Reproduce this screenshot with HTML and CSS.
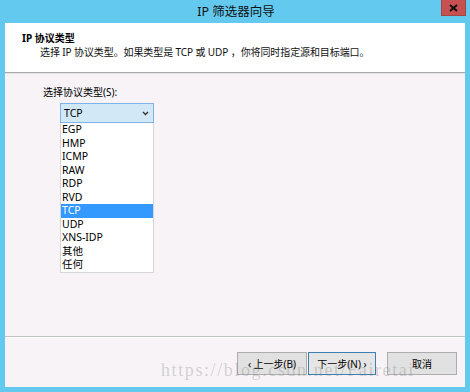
FILE: index.html
```html
<!DOCTYPE html>
<html lang="zh-CN">
<head>
<meta charset="utf-8">
<title>IP 筛选器向导</title>
<link rel="stylesheet" href="styles.css">
</head>
<body>
<div class="window">
  <div class="titlebar">
    <div class="title">IP 筛选器向导</div>
    <div class="close"><svg width="9" height="8" viewBox="0 0 9 8"><path d="M1 1 L8 7 M8 1 L1 7" stroke="#111" stroke-width="2"/></svg></div>
  </div>
  <div class="client">
    <div class="header">
      <div class="h-title">IP 协议类型</div>
      <div class="h-sub">选择 IP 协议类型。如果类型是 TCP 或 UDP ，你将同时指定源和目标端口。</div>
    </div>
    <div class="content">
      <div class="label">选择协议类型(S):</div>
      <div class="dropdown">
        <div class="combo">
          <span>TCP</span>
          <svg class="chev" width="7" height="5" viewBox="0 0 7 5"><path d="M1 1 L3.5 3.5 L6 1" fill="none" stroke="#333" stroke-width="1.3"/></svg>
        </div>
        <ul class="list">
          <li>EGP</li>
          <li>HMP</li>
          <li>ICMP</li>
          <li>RAW</li>
          <li>RDP</li>
          <li>RVD</li>
          <li class="sel">TCP</li>
          <li>UDP</li>
          <li>XNS-IDP</li>
          <li>其他</li>
          <li>任何</li>
        </ul>
      </div>
    </div>
    <div class="footer">
      <button class="btn btn-prev">&lsaquo; 上一步(B)</button>
      <button class="btn btn-next">下一步(N) &rsaquo;</button>
      <button class="btn btn-cancel">取消</button>
      <div class="watermark">https://blog.csdn.net/Fairetai</div>
    </div>
  </div>
</div>
</body>
</html>
```
FILE: styles.css
```css
* { box-sizing: border-box; }
html, body { margin: 0; padding: 0; }
body {
  width: 470px;
  height: 392px;
  overflow: hidden;
  font-family: "Noto Sans", "Noto Sans CJK SC", sans-serif;
  font-size: 10px;
  color: #000;
}
.window {
  width: 470px;
  height: 392px;
  background: #63c9ef;
  padding: 0 5px 5px 5px;
  display: flex;
  flex-direction: column;
}
.titlebar {
  height: 23px;
  position: relative;
  display: flex;
  align-items: center;
  justify-content: center;
}
.title {
  font-size: 12.5px;
  line-height: 23px;
  color: #111;
  padding-left: 2px;
}
.close {
  position: absolute;
  left: 436px;
  top: 0;
  width: 25px;
  height: 16px;
  background: #c75050;
  border: 1px solid #a24444;
  border-top: none;
  display: flex;
  align-items: center;
  justify-content: center;
}
.client {
  flex: 1;
  display: flex;
  flex-direction: column;
  background: #f7f3f7;
}
.header {
  height: 50px;
  background: #fff;
  padding: 8px 0 0 17px;
  line-height: 14px;
  border-bottom: 1px solid #a8a8a8;
  box-shadow: 0 1px 0 #e6e2e6;
}
.h-title { font-weight: bold; }
.h-sub { padding-left: 18px; color: #111; letter-spacing: -0.1px; }
.content {
  flex: 1;
  padding: 12px 0 0 38px;
  border-bottom: 1px solid #c4c4c4;
  box-shadow: 0 1px 0 #ffffff;
}
.label {
  line-height: 14px;
  height: 14px;
  margin-bottom: 4px;
}
.dropdown {
  margin-left: 17px;
  width: 94px;
}
.combo {
  height: 20px;
  background: #d3e8f7;
  border: 1px solid #7eb4ea;
  display: flex;
  align-items: center;
  justify-content: space-between;
  padding: 0 4px 0 3px;
  line-height: 14px;
  font-size: 10.5px;
}
.chev { display: block; }
.list {
  list-style: none;
  margin: 0;
  padding: 0;
  background: #fff;
  border: 1px solid #d6d6d6;
  border-top: none;
  font-size: 10.5px;
}
.list li {
  height: 13.5px;
  line-height: 13.5px;
  padding-left: 1px;
}
.list li.sel {
  background: #3399ff;
  color: #fff;
}
.footer {
  height: 50px;
  position: relative;
  display: flex;
  align-items: flex-start;
  padding: 15px 0 0 232px;
}
.btn {
  font-family: inherit;
  font-size: 10px;
  height: 23px;
  width: 70px;
  background: #e1e1e1;
  border: 1px solid #adadad;
  padding: 0;
  margin: 0;
  color: #000;
  line-height: 20px;
}
.btn-next { margin-left: 1px; width: 68px; border-color: #3c7fb1; background: #e5e5e5; }
.btn-cancel { margin-left: 11px; }
.watermark {
  position: absolute;
  left: 156px;
  top: 23px;
  font-family: "Liberation Serif", serif;
  font-size: 18px;
  letter-spacing: 1.6px;
  color: rgba(120, 120, 120, 0.3);
  white-space: nowrap;
  pointer-events: none;
}
```
